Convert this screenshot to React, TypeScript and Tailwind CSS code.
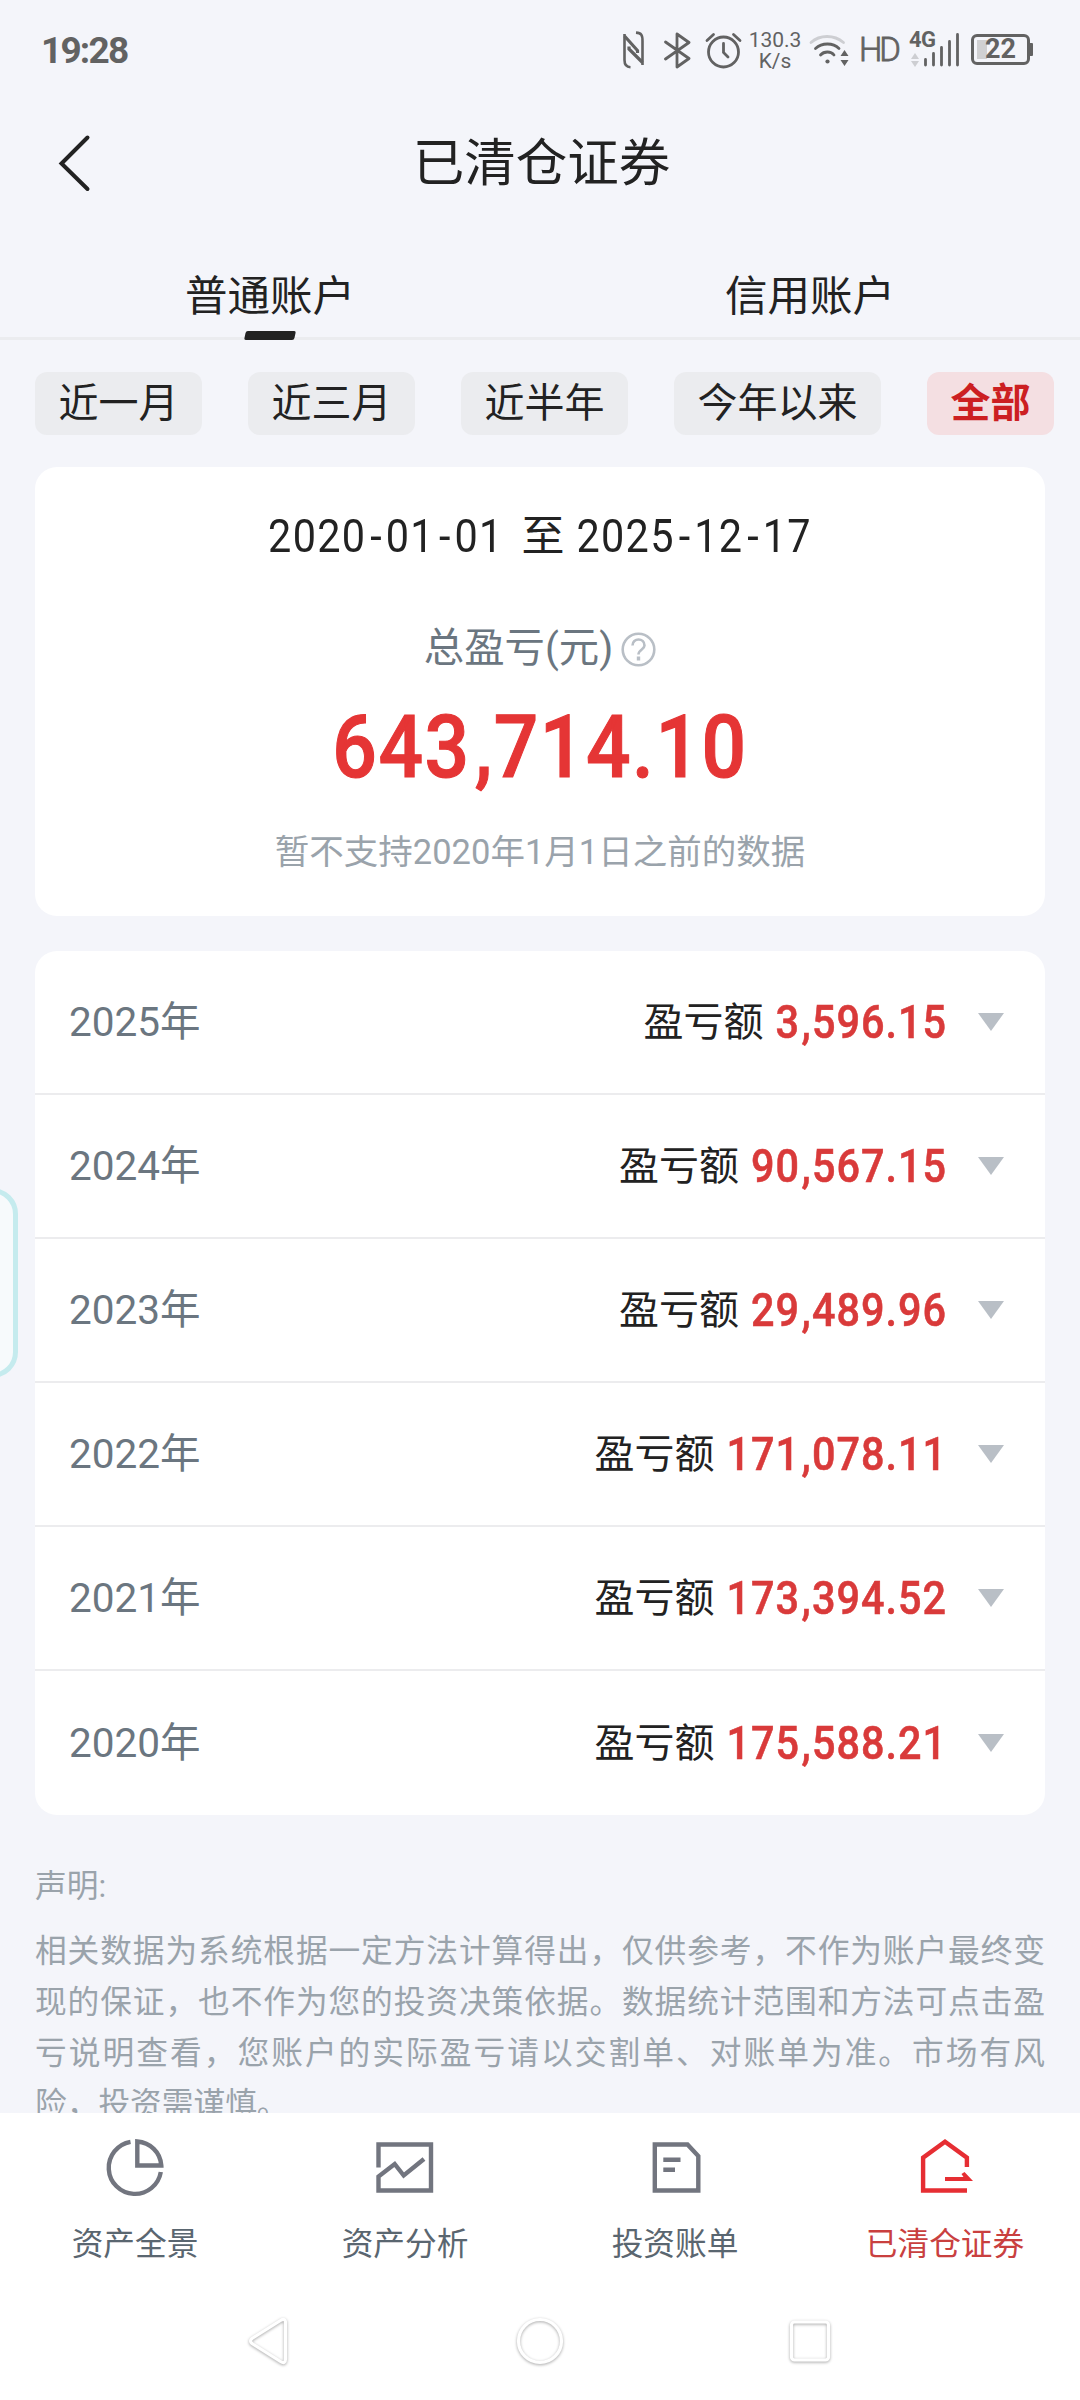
import React from 'react';

const periods = [
  { label: '近一月', active: false },
  { label: '近三月', active: false },
  { label: '近半年', active: false },
  { label: '今年以来', active: false },
  { label: '全部', active: true },
];

const years = [
  { year: '2025年', amount: '3,596.15' },
  { year: '2024年', amount: '90,567.15' },
  { year: '2023年', amount: '29,489.96' },
  { year: '2022年', amount: '171,078.11' },
  { year: '2021年', amount: '173,394.52' },
  { year: '2020年', amount: '175,588.21' },
];

/* Tall, narrow figures; commas and hyphens get their own spacing. */
function Figures({ text, sep, className }: { text: string; sep: string; className: string }) {
  return (
    <span className={`inline-block scale-y-[1.11] ${className}`}>
      {text.split(/([,-])/).map((part, i) =>
        i % 2 ? (
          <span key={i} className={sep}>
            {part}
          </span>
        ) : (
          part
        ),
      )}
    </span>
  );
}

function StatusBar() {
  return (
    <div className="flex h-[100px] items-center pl-[41px] text-[#626262]">
      <span className="mt-[1px] w-[88px] text-[37px] font-bold leading-[44px] tracking-[-1.8px]">19:28</span>
      <svg className="ml-[494px]" width="22" height="38" viewBox="0 0 22 38" fill="none" stroke="currentColor" strokeWidth="2.6">
        <path d="M7.5 36.2C2.5 36 1.5 33 1.5 29V3M19.5 34V10C19.5 4 18.5 2 13 1.6" />
        <path d="M1.5 5L14.5 19.5V22M6 15.5V18L19.5 31.5" strokeWidth="3.2" />
      </svg>
      <svg className="ml-[19px]" width="27" height="37" viewBox="0 0 27 37" fill="none" stroke="currentColor" strokeWidth="2.8" strokeLinejoin="round" strokeLinecap="round">
        <path d="M1.5 10L25 26.5L13 35V2L25 10.5L1.5 27" />
      </svg>
      <svg className="ml-[14px]" width="37" height="37" viewBox="0 0 37 37" fill="none" stroke="currentColor" strokeWidth="2.8" strokeLinecap="round">
        <circle cx="18.5" cy="20" r="15" />
        <path d="M18.5 11.5V20.5L23 25M2 8.5L8.5 2.5M28.5 2.5L35 8.5" />
      </svg>
      <div className="ml-[7px] mt-[2px] flex w-[52px] flex-col items-center text-[21px] leading-[21px]">
        <span>130.3</span>
        <span>K/s</span>
      </div>
      <svg className="ml-[8px]" width="40" height="36" viewBox="0 0 40 36" fill="none" stroke="currentColor" strokeWidth="2.8" strokeLinecap="round">
        <path d="M2 10.5C11 2.5 25 2.5 34.5 10.5" stroke="#cdced2" />
        <path d="M6.5 16.5C13 10.5 24 10.5 30 16.5M11.5 23C15 19 22 19 25 23" />
        <circle cx="18.5" cy="29.5" r="2.1" fill="currentColor" stroke="none" />
        <path d="M35.5 18l4 6h-8zM35.5 34l4 -6h-8z" fill="currentColor" stroke="none" />
      </svg>
      <span className="ml-[10px] w-[38px] text-[33px] font-light leading-[36px] tracking-[-3px] [-webkit-text-stroke:0.8px_currentColor]">HD</span>
      <div className="relative ml-[12px] h-[38px] w-[51px]">
        <span className="absolute left-0 -top-[3px] text-[22px] font-bold leading-[24px] tracking-[-0.5px]">4G</span>
        <svg width="51" height="38" viewBox="0 0 51 38">
          <path d="M6 22l4 6H2zM6 36l4-6H2z" fill="#cdced2" />
          <path d="M16.5 28.5V34M24.5 22.5V34M32.5 16.5V34M40.5 10.5V34M48.5 3.5V34" stroke="currentColor" strokeWidth="2.8" strokeLinecap="round" />
        </svg>
      </div>
      <div className="ml-[11px] mt-[-2px] flex items-center">
        <div className="relative flex h-[31px] w-[59px] items-center justify-center rounded-[6px] border-[3px] border-[#626262]">
          <span className="absolute left-[3px] top-[3px] h-[19px] w-[10px] bg-[#d0d0d2]" />
          <span className="relative text-[27px] font-bold leading-[26px]">22</span>
        </div>
        <span className="h-[13px] w-[3px] rounded-r-[1px] bg-[#626262]" />
      </div>
    </div>
  );
}

function Header() {
  return (
    <header className="grid h-[124px] grid-cols-[120px_1fr_120px] items-center">
      <svg className="ml-[57px] mt-[2px]" width="34" height="60" viewBox="0 0 34 60" fill="none" stroke="#222" strokeWidth="4" strokeLinecap="round">
        <path d="M30.5 4.5L4.5 30.5L30.5 56" />
      </svg>
      <h1 className="mt-[4px] pl-[3px] text-center text-[51.5px] leading-[70px] text-[#222]">已清仓证券</h1>
    </header>
  );
}

function Tabs() {
  return (
    <div className="grid h-[116px] grid-cols-2 border-b-[3px] border-[#ebecef] text-center text-[42.5px] leading-[60px] text-[#222]">
      <div className="relative pt-[43px]">
        普通账户
        <span className="absolute -bottom-[3px] left-[245px] h-[9px] w-[50px] -skew-x-12 rounded-[2px] bg-[#222]" />
      </div>
      <div className="pt-[43px]">信用账户</div>
    </div>
  );
}

function Summary() {
  return (
    <section className="mx-[35px] mt-[32px] flex h-[449px] flex-col items-center rounded-[22px] bg-white">
      <div className="mt-[39px] flex h-[60px] items-center leading-[60px] text-[#222]">
        <Figures text="2020-01-01" className="text-[41.4px] tracking-[1.3px]" sep="pl-[4px] tracking-[4px]" />
        <span className="ml-[18px] mr-[12px] text-[43px]">至</span>
        <Figures text="2025-12-17" className="text-[41.4px] tracking-[1.3px]" sep="pl-[4px] tracking-[4px]" />
      </div>
      <div className="mt-[53px] flex h-[60px] items-center gap-[8px] text-[40.4px] leading-[60px] text-[#6b7680]">
        总盈亏(元)
        <svg width="35" height="35" viewBox="0 0 35 35" fill="none" stroke="#b9bfc6" strokeWidth="2.6">
          <circle cx="17.5" cy="17.5" r="15.8" />
          <path d="M11.5 13.5C11.5 5.5 23.5 5.5 23.5 13.5C23.5 17.5 17.5 17.5 17.5 22.5" />
          <path d="M17.5 24.5V28.5" strokeWidth="3.4" />
        </svg>
      </div>
      <div className="mt-[18px] h-[100px] leading-[100px] text-[#e53535]">
        <Figures text="643,714.10" className="text-[78.5px] font-medium tracking-[1.5px] [-webkit-text-stroke:1px_currentColor]" sep="pl-[4px]" />
      </div>
      <p className="mt-[25px] text-[34.5px] leading-[60px] text-[#9aa3ab]">暂不支持2020年1月1日之前的数据</p>
    </section>
  );
}

function YearList() {
  return (
    <section className="mx-[35px] mt-[35px] overflow-hidden rounded-[22px] bg-white">
      {years.map((y) => (
        <div key={y.year} className="flex h-[144px] items-center border-b-2 border-[#ececee] pl-[34px] pr-[41px] last:border-b-0">
          <span className="text-[40.5px] leading-[60px] text-[#6b7680]">{y.year}</span>
          <span className="ml-auto mt-[2px] text-[40px] leading-[60px] text-[#222]">盈亏额</span>
          <span className="ml-[12px] mt-[8px] leading-[60px] text-[#d93a3a]">
            <Figures text={y.amount} className="text-[41.4px] font-medium tracking-[1px] [-webkit-text-stroke:0.5px_currentColor]" sep="pl-[1.5px]" />
          </span>
          <svg className="ml-[31px]" width="26" height="18" viewBox="0 0 26 18">
            <path d="M0 0H26L13 18Z" fill="#b9bfc6" />
          </svg>
        </div>
      ))}
    </section>
  );
}

function NavItem({ label, active, children }: { label: string; active?: boolean; children: React.ReactNode }) {
  return (
    <div className={active ? 'flex flex-col items-center text-[#e62e33]' : 'flex flex-col items-center text-[#72757f]'}>
      <svg width="60" height="60" viewBox="0 0 60 60" fill="none" stroke="currentColor" strokeWidth="4.4">
        {children}
      </svg>
      <span className={active ? 'mt-[25px] text-[31.7px] leading-[44px] text-[#c9403f]' : 'mt-[25px] text-[31.7px] leading-[44px] text-[#5a6670]'}>{label}</span>
    </div>
  );
}

function BottomNav() {
  return (
    <nav className="grid h-[177px] grid-cols-4 bg-white pt-[25px]">
      <NavItem label="资产全景">
        <path d="M25.5 3.9A26.2 26.2 0 1 0 55.8 34" />
        <path d="M32.3 3.5C45 4.5 55.5 14 56.3 27.5H32.3Z" />
      </NavItem>
      <NavItem label="资产分析">
        <path d="M3.5 29.5V6.5H56V52.5H3.5V38.5L19.7 26L28.7 37.5L49 21" />
      </NavItem>
      <NavItem label="投资账单">
        <path d="M9.8 6.5H42.5L53.3 18V52.5H9.8Z" />
        <path d="M18.3 21.7H35.5M18.3 31.7H30" />
      </NavItem>
      <NavItem label="已清仓证券" active>
        <path d="M52 52.5H8.1V19.7L30 3.8L51.9 19.7V29" />
        <path d="M30 39H48.5L46.5 36L49.5 34L58 43H30Z" fill="currentColor" stroke="none" />
      </NavItem>
    </nav>
  );
}

function SystemNav() {
  return (
    <div className="flex h-[110px] justify-center gap-[216px] bg-white pt-[24px]">
      {[
        <path key="b" d="M37.5 6.5Q42.5 3.5 42.5 9V45Q42.5 50.5 37.5 47.5L9 29.5Q6 27 9 24.5Z" />,
        <circle key="h" cx="27" cy="27" r="21.5" />,
        <rect key="r" x="8.5" y="8" width="37" height="38" rx="3" />,
      ].map((shape, i) => (
        <svg key={i} width="54" height="58" viewBox="0 0 54 58" fill="none" stroke="white" strokeWidth="3.2" className="drop-shadow-[0_1px_1.5px_rgba(0,0,0,0.35)]">
          {shape}
        </svg>
      ))}
    </div>
  );
}

export default function App() {
  return (
    <div className="relative flex h-[2400px] w-[1080px] flex-col overflow-hidden bg-[#f4f5fa] font-['Roboto','Noto_Sans_CJK_SC',sans-serif]" lang="zh-CN">
      <main className="h-[2113px] overflow-hidden">
        <StatusBar />
        <Header />
        <Tabs />
        <div className="mt-[32px] flex gap-[46px] pl-[35px]">
          {periods.map((p) => (
            <button
              key={p.label}
              className={
                p.active
                  ? 'h-[63px] w-[127px] rounded-[12px] bg-[#f4dfe2] text-[40px] font-bold leading-[60px] text-[#cc1f22]'
                  : 'h-[63px] rounded-[12px] bg-[#ebecef] px-[23.5px] text-[40px] leading-[60px] text-[#222]'
              }
            >
              {p.label}
            </button>
          ))}
        </div>
        <Summary />
        <YearList />
        <div className="mx-[35px] mt-[46px] text-[31.7px] leading-[51px] text-[#9aa3ab]">
          <p>声明:</p>
          <p className="mt-[14px] text-justify">
            相关数据为系统根据一定方法计算得出，仅供参考，不作为账户最终变现的保证，也不作为您的投资决策依据。数据统计范围和方法可点击盈亏说明查看，您账户的实际盈亏请以交割单、对账单为准。市场有风险，投资需谨慎。
          </p>
        </div>
      </main>
      <BottomNav />
      <SystemNav />
      <div className="absolute -left-[34px] top-[1188px] h-[190px] w-[52px] rounded-[28px] border-[5px] border-[#c5ebee] bg-[#f7fafc]" />
    </div>
  );
}
